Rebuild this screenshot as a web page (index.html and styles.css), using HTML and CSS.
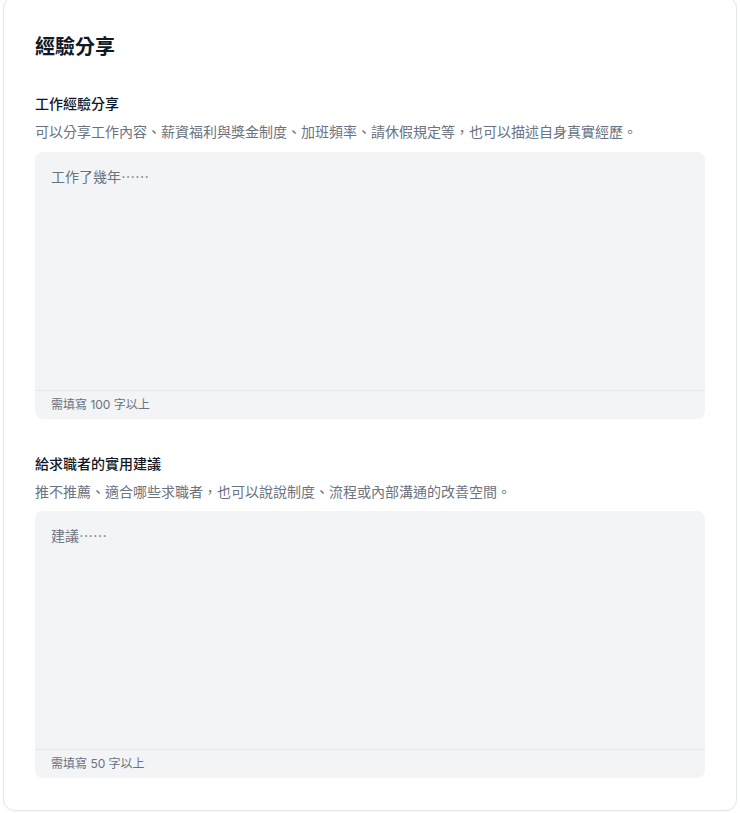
FILE: index.html
```html
<!DOCTYPE html>
<html lang="zh-Hant">
<head>
<meta charset="utf-8">
<title>經驗分享</title>
<link rel="stylesheet" href="styles.css">
</head>
<body>
<div class="page">
  <section class="card">
    <h1 class="title">經驗分享</h1>
    <div class="field field-first">
      <label class="label" for="exp">工作經驗分享</label>
      <p class="desc">可以分享工作內容、薪資福利與獎金制度、加班頻率、請休假規定等，也可以描述自身真實經歷。</p>
      <div class="box box-first">
        <textarea id="exp" class="input" placeholder="工作了幾年……"></textarea>
        <div class="foot">需填寫 100 字以上</div>
      </div>
    </div>
    <div class="field">
      <label class="label" for="tip">給求職者的實用建議</label>
      <p class="desc">推不推薦、適合哪些求職者，也可以說說制度、流程或內部溝通的改善空間。</p>
      <div class="box">
        <textarea id="tip" class="input" placeholder="建議……"></textarea>
        <div class="foot">需填寫 50 字以上</div>
      </div>
    </div>
  </section>
</div>
</body>
</html>
```

FILE: styles.css
```css
* { box-sizing: border-box; }
html, body { margin: 0; padding: 0; background: #ffffff; }
body {
  font-family: Inter, "Noto Sans CJK TC", "Noto Sans", sans-serif;
  color: #111827;
  overflow: hidden;
}
.page {
  padding: 0 3px 3px 3px;
}
.card {
  margin-top: -4px;
  background: #ffffff;
  border: 1px solid #e5e7eb;
  border-radius: 12px;
  box-shadow: 0 1px 2px rgba(0,0,0,0.04);
  padding: 35px 31px 32px 31px;
  display: flex;
  flex-direction: column;
}
.title {
  margin: 0 0 33px 0;
  font-family: "Noto Sans CJK TC", sans-serif;
  font-size: 20px;
  line-height: 28px;
  font-weight: 700;
  color: #111827;
}
.field {
  display: flex;
  flex-direction: column;
  margin-top: 34px;
}
.field-first { margin-top: 0; }
.label {
  font-family: "Noto Sans CJK TC", sans-serif;
  font-size: 14px;
  line-height: 20px;
  font-weight: 500;
  color: #111827;
  margin-bottom: 8px;
}
.desc {
  margin: 0 0 10px 0;
  font-family: "Noto Sans CJK TC", sans-serif;
  font-size: 14px;
  line-height: 20px;
  color: #6b7280;
}
.box-first { margin-top: 1px; }
.box {
  background: #f3f4f6;
  border-radius: 8px;
  display: flex;
  flex-direction: column;
  overflow: hidden;
}
.input {
  display: block;
  width: 100%;
  height: 238px;
  border: 0;
  outline: none;
  resize: none;
  background: transparent;
  padding: 12px 16px;
  font-family: "Noto Sans CJK TC", sans-serif;
  font-size: 14px;
  line-height: 24px;
  color: #111827;
}
.input::placeholder { color: #6b7280; opacity: 1; }
.foot {
  border-top: 1px solid #e5e7eb;
  padding: 6px 16px;
  font-size: 12px;
  line-height: 16px;
  color: #6b7280;
}
```
